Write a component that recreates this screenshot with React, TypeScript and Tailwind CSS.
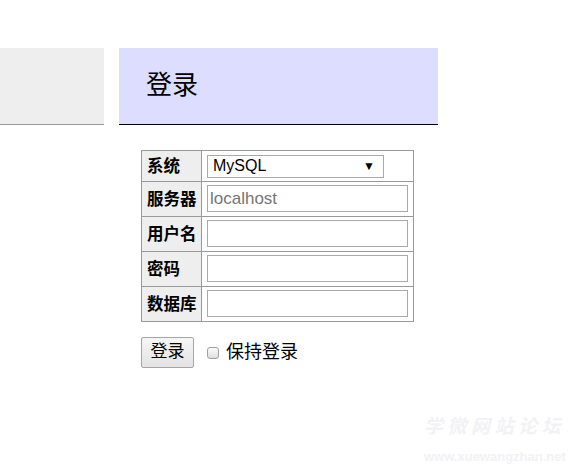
import React from 'react';

const font = { fontFamily: '"Liberation Sans", "Noto Sans CJK SC", sans-serif' };

const rows = [
  { label: '服务器', value: 'localhost' },
  { label: '用户名', value: '' },
  { label: '密码', value: '' },
  { label: '数据库', value: '' },
];

export default function App() {
  return (
    <div className="relative w-[581px] h-[469px] overflow-hidden bg-white text-black" style={font}>
      {/* Top: menu block + page heading */}
      <div className="flex items-start gap-[15px] pt-[48px]">
        <div className="w-[104px] h-[77px] bg-[#eeeeee] border-b border-[#999999]" />
        <h2 className="w-[319px] h-[77px] bg-[#ddddff] border-b border-black pl-[27px] flex items-center text-[26px] font-normal pb-[2px]">
          登录
        </h2>
      </div>

      {/* Login form */}
      <div className="ml-[141px] mt-[25px]">
        <div className="grid grid-cols-[60px_212px] w-[273px] border-l border-t border-[#999999] text-[16.5px]">
          <div className="h-[31px] bg-[#eeeeee] border-r border-b border-[#999999] flex items-center pl-[5px] font-bold">
            系统
          </div>
          <div className="h-[31px] border-r border-b border-[#999999] flex items-center pl-[5px]">
            <div className="w-[177px] h-[23px] border border-[#a9a9a9] bg-white flex items-center justify-between pl-[5px] pr-[8px]">
              <span className="text-[16px]">MySQL</span>
              <span className="text-[12px] leading-none">▼</span>
            </div>
          </div>
          {rows.map((r) => (
            <React.Fragment key={r.label}>
              <div className="h-[35px] bg-[#eeeeee] border-r border-b border-[#999999] flex items-center pl-[5px] font-bold">
                {r.label}
              </div>
              <div className="h-[35px] border-r border-b border-[#999999] pl-[5px] pt-[3px]">
                <div className="w-[201px] h-[27px] border border-[#a9a9a9] bg-white flex items-center pl-[2px] text-[17px] text-[#757575]">
                  {r.value}
                </div>
              </div>
            </React.Fragment>
          ))}
        </div>

        <div className="flex items-center mt-[15px]">
          <button className="w-[53px] h-[31px] border border-[#a6a6a6] rounded-[2px] bg-gradient-to-b from-[#f6f6f6] to-[#e3e3e3] text-[17px] flex items-center justify-center pb-[1px]">
            登录
          </button>
          <span className="ml-[13px] w-[12px] h-[12px] border border-[#a0a0a0] rounded-[3px] bg-gradient-to-b from-[#fbfbfb] to-[#dedede]" />
          <span className="ml-[7px] text-[18px]">保持登录</span>
        </div>
      </div>

      {/* Watermark */}
      <div className="absolute left-[424px] top-[417px] w-[145px] flex flex-col items-start text-[#f2f2f5] select-none whitespace-nowrap">
        <span className="text-[19px] font-bold italic tracking-[4.5px] leading-none">学微网站论坛</span>
        <span className="mt-[14px] text-[13px] font-bold leading-none">www.xuewangzhan.net</span>
      </div>
    </div>
  );
}
